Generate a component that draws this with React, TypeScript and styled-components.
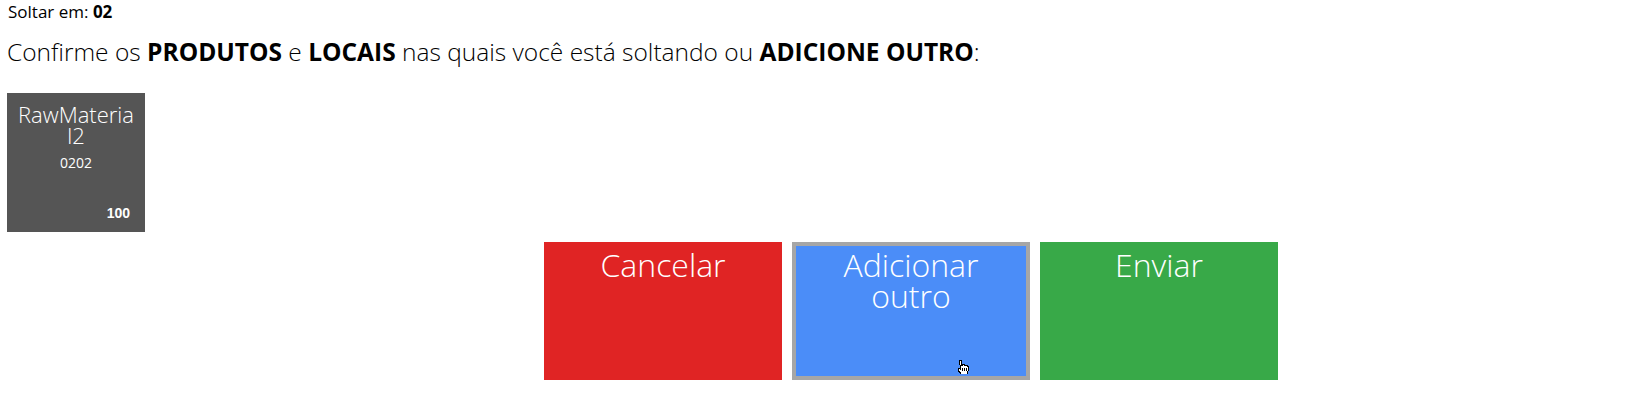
import React from 'react';
import styled, { createGlobalStyle } from 'styled-components';

const GlobalStyle = createGlobalStyle`
  html, body {
    margin: 0;
    padding: 0;
    background: #ffffff;
  }
  body {
    font-family: "Open Sans", "Noto Sans", sans-serif;
    color: #000000;
  }
`;

const Page = styled.div`
  padding: 1px 7px 0 7px;
`;

const DropInfo = styled.div`
  font-size: 17px;
  line-height: 22px;
  font-weight: 400;
  padding-left: 1px;
  b {
    font-weight: 700;
  }
`;

const Prompt = styled.h2`
  margin: 13px 0 0 0;
  font-size: 24.5px;
  line-height: 32px;
  font-weight: 300;
  b {
    font-weight: 700;
  }
`;

const TileRow = styled.div`
  display: flex;
  gap: 10px;
  margin-top: 25px;
`;

const Tile = styled.div`
  width: 138px;
  height: 139px;
  box-sizing: border-box;
  background: #555555;
  color: #ffffff;
  display: flex;
  flex-direction: column;
  padding: 11px 10px 11px 10px;
  text-align: center;
`;

const TileName = styled.div`
  font-size: 22px;
  line-height: 21px;
  font-weight: 300;
  word-break: break-all;
`;

const TileCode = styled.div`
  margin-top: 8px;
  font-size: 14px;
  line-height: 18px;
  font-weight: 400;
`;

const TileQty = styled.div`
  margin-top: auto;
  align-self: flex-end;
  padding-right: 5px;
  font-family: "Liberation Sans", Arial, sans-serif;
  font-weight: 700;
  font-size: 14px;
  line-height: 16px;
`;

const ButtonRow = styled.div`
  display: flex;
  gap: 10px;
  margin-top: 10px;
  padding-left: 537px;
`;

const ActionButton = styled.button<{ $bg: string; $active?: boolean }>`
  position: relative;
  width: 238px;
  height: 138px;
  box-sizing: border-box;
  margin: 0;
  padding: 3px 10px 0 10px;
  border: 4px solid ${(p) => (p.$active ? '#a6a6a6' : p.$bg)};
  background: ${(p) => p.$bg};
  color: #ffffff;
  font-family: "Open Sans", "Noto Sans", sans-serif;
  font-size: 32px;
  line-height: 31px;
  font-weight: 300;
  text-align: center;
  display: flex;
  align-items: flex-start;
  justify-content: center;
  cursor: pointer;
`;

const Pointer = styled.svg`
  position: absolute;
  left: 160px;
  top: 114px;
`;

const HandCursor = () => (
  <Pointer width="13" height="14" viewBox="0 0 13 14">
    <path
      d="M3.5 0.5h2v5h1v-1h2v1h1v-0.5h1.5v1h1v5l-1 3h-6l-3-4v-2h1.5l1 1z"
      fill="#ffffff"
      stroke="#000000"
      strokeWidth="1"
      shapeRendering="crispEdges"
    />
    <path d="M6.5 8v3M8.5 8v3M10.5 8v3" stroke="#000000" strokeWidth="1" shapeRendering="crispEdges" />
  </Pointer>
);

export default function App() {
  return (
    <Page>
      <GlobalStyle />
      <DropInfo>
        Soltar em: <b>02</b>
      </DropInfo>
      <Prompt>
        Confirme os <b>PRODUTOS</b> e <b>LOCAIS</b> nas quais você está soltando ou <b>ADICIONE OUTRO</b>:
      </Prompt>

      <TileRow>
        <Tile>
          <TileName>RawMaterial2</TileName>
          <TileCode>0202</TileCode>
          <TileQty>100</TileQty>
        </Tile>
      </TileRow>

      <ButtonRow>
        <ActionButton $bg="#e02424">Cancelar</ActionButton>
        <ActionButton $bg="#4b8df8" $active>
          Adicionar outro
          <HandCursor />
        </ActionButton>
        <ActionButton $bg="#38a948">Enviar</ActionButton>
      </ButtonRow>
    </Page>
  );
}
